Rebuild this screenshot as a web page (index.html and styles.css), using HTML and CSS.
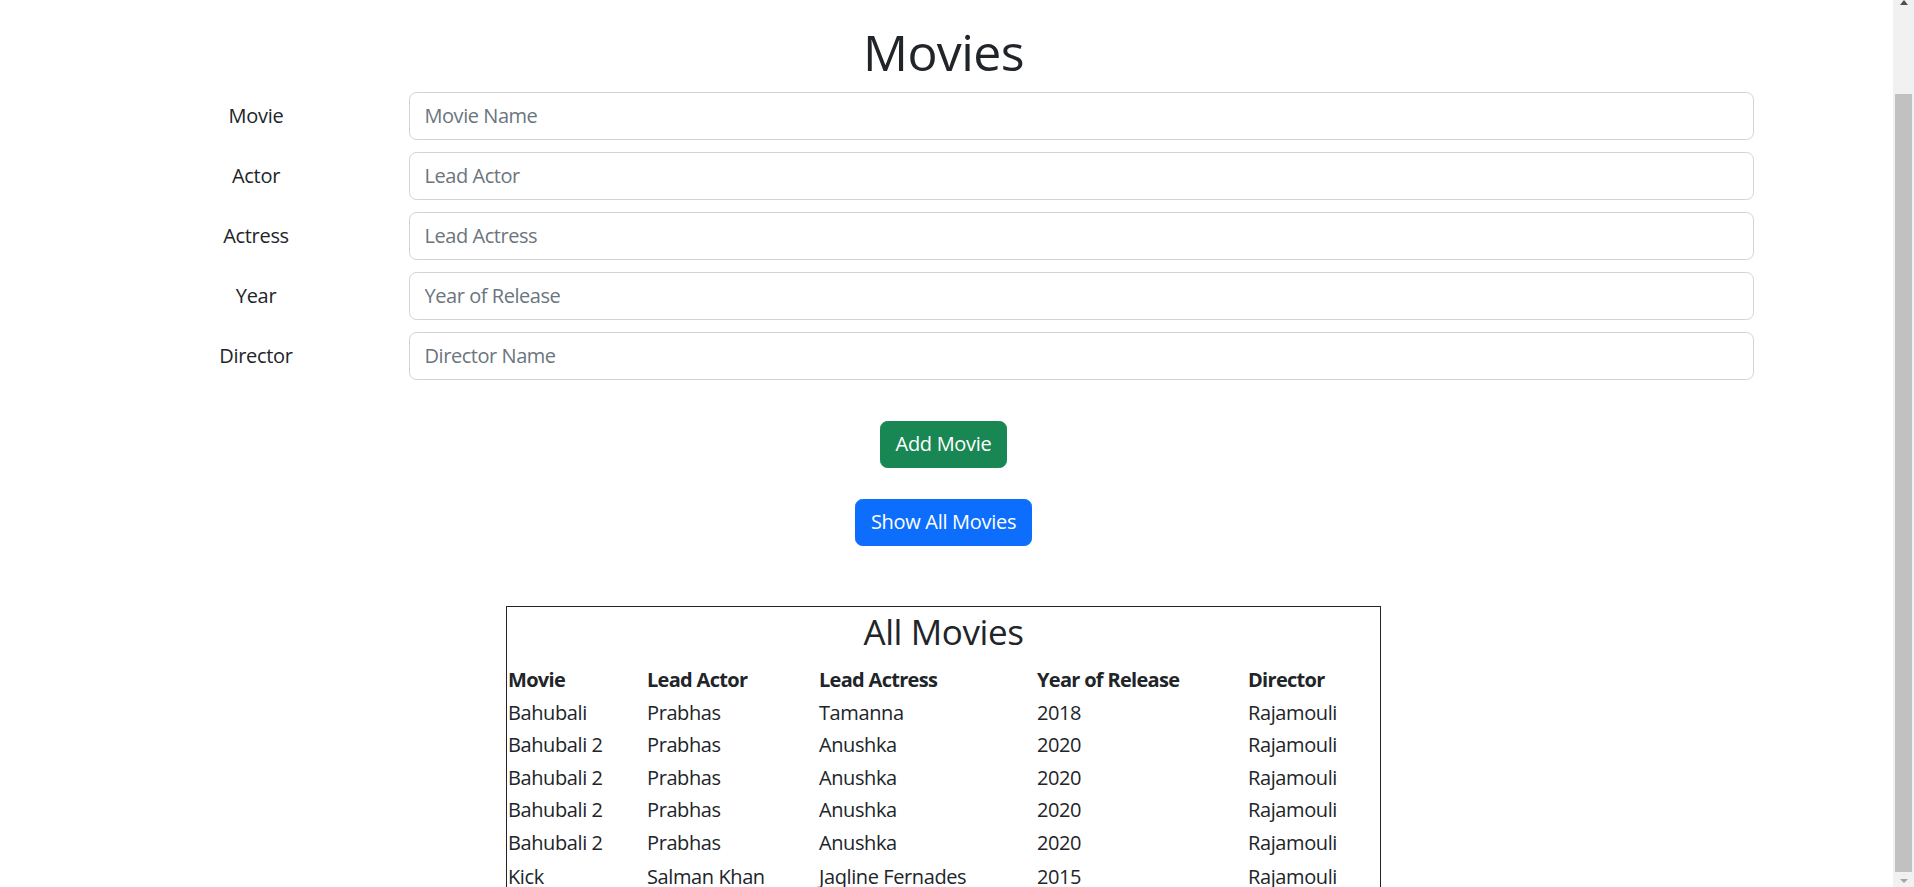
FILE: index.html
```html
<!DOCTYPE html>
<html lang="en">
<head>
<meta charset="utf-8">
<title>Movies</title>
<link rel="stylesheet" href="styles.css">
</head>
<body>
<div class="app">
  <main class="page">
    <h1 class="title">Movies</h1>
    <form class="movie-form">
      <div class="form-row">
        <label class="form-label" for="movie">Movie</label>
        <input class="form-control" id="movie" type="text" placeholder="Movie Name">
      </div>
      <div class="form-row">
        <label class="form-label" for="actor">Actor</label>
        <input class="form-control" id="actor" type="text" placeholder="Lead Actor">
      </div>
      <div class="form-row">
        <label class="form-label" for="actress">Actress</label>
        <input class="form-control" id="actress" type="text" placeholder="Lead Actress">
      </div>
      <div class="form-row">
        <label class="form-label" for="year">Year</label>
        <input class="form-control" id="year" type="text" placeholder="Year of Release">
      </div>
      <div class="form-row">
        <label class="form-label" for="director">Director</label>
        <input class="form-control" id="director" type="text" placeholder="Director Name">
      </div>
    </form>
    <div class="actions">
      <button class="btn btn-success" type="button">Add Movie</button>
      <button class="btn btn-primary" type="button">Show All Movies</button>
    </div>
    <section class="movie-list">
      <h3 class="list-title">All Movies</h3>
      <table class="movie-table">
        <colgroup>
          <col class="c-movie"><col class="c-actor"><col class="c-actress"><col class="c-year"><col class="c-director">
        </colgroup>
        <thead>
          <tr><th>Movie</th><th>Lead Actor</th><th>Lead Actress</th><th>Year of Release</th><th>Director</th></tr>
        </thead>
        <tbody>
          <tr><td>Bahubali</td><td>Prabhas</td><td>Tamanna</td><td>2018</td><td>Rajamouli</td></tr>
          <tr><td>Bahubali 2</td><td>Prabhas</td><td>Anushka</td><td>2020</td><td>Rajamouli</td></tr>
          <tr><td>Bahubali 2</td><td>Prabhas</td><td>Anushka</td><td>2020</td><td>Rajamouli</td></tr>
          <tr><td>Bahubali 2</td><td>Prabhas</td><td>Anushka</td><td>2020</td><td>Rajamouli</td></tr>
          <tr><td>Bahubali 2</td><td>Prabhas</td><td>Anushka</td><td>2020</td><td>Rajamouli</td></tr>
          <tr class="row-tall"><td>Kick</td><td>Salman Khan</td><td>Jaqline Fernades</td><td>2015</td><td>Rajamouli</td></tr>
        </tbody>
      </table>
    </section>
  </main>
  <aside class="scrollbar" aria-hidden="true">
    <span class="arrow-up"></span>
    <span class="thumb"></span>
    <span class="arrow-down"></span>
  </aside>
</div>
</body>
</html>
```
FILE: styles.css
```css
* { box-sizing: border-box; }

html, body {
  margin: 0;
  height: 100%;
  overflow: hidden;
}

body {
  font-family: "Open Sans", "Noto Sans", sans-serif;
  font-size: 20px;
  line-height: 1.5;
  color: #212529;
  background: #fff;
  letter-spacing: -0.3px;
}

.app {
  display: flex;
  height: 887px;
}

.page {
  flex: 1;
  overflow: hidden;
  padding: 22px 6px 0 0;
}

.title {
  margin: 0 0 10px;
  font-size: 50px;
  font-weight: 500;
  line-height: 1.2;
  text-align: center;
  letter-spacing: -0.6px;
}

.movie-form {
  width: 1650px;
  margin: 0 auto;
}

.form-row {
  display: grid;
  grid-template-columns: 275px 1fr;
  column-gap: 15px;
  padding-right: 15px;
  align-items: center;
  margin-bottom: 12.5px;
}

.form-label {
  text-align: center;
}

.form-control {
  display: block;
  width: 100%;
  height: 47.5px;
  padding: 7.5px 15px;
  font-family: inherit;
  font-size: 20px;
  line-height: 30px;
  letter-spacing: -0.45px;
  color: #212529;
  background: #fff;
  border: 1px solid #ced4da;
  border-radius: 7.5px;
}

.form-control::placeholder {
  color: #6c757d;
  opacity: 1;
}

.actions {
  display: flex;
  flex-direction: column;
  align-items: center;
  gap: 30.5px;
  margin-top: 41px;
}

.btn {
  display: inline-block;
  height: 47.5px;
  padding: 7.5px 15px;
  font-family: inherit;
  font-size: 20px;
  line-height: 30px;
  letter-spacing: -0.3px;
  color: #fff;
  border: 1px solid transparent;
  border-radius: 7.5px;
  cursor: pointer;
}

.btn-success {
  background: #198754;
  border-color: #198754;
}

.btn-primary {
  background: #0d6efd;
  border-color: #0d6efd;
}

.movie-list {
  width: 875px;
  margin: 60px auto 0;
  padding-top: 4px;
  border: 1px solid #212529;
}

.list-title {
  margin: 0 0 11px;
  font-size: 35px;
  font-weight: 500;
  line-height: 1.2;
  text-align: center;
  letter-spacing: -0.4px;
}

.movie-table {
  width: 100%;
  border-collapse: collapse;
  table-layout: fixed;
}

.c-movie { width: 139px; }
.c-actor { width: 172px; }
.c-actress { width: 218px; }
.c-year { width: 211px; }
.c-director { width: 133px; }

.movie-table th,
.movie-table td {
  padding: 1px 1px;
  line-height: 30.5px;
  text-align: left;
  white-space: nowrap;
  letter-spacing: -0.4px;
}

.movie-table th {
  font-weight: 700;
  letter-spacing: -0.7px;
}

.row-tall td {
  padding-top: 3px;
}

.scrollbar {
  flex: 0 0 21px;
  display: flex;
  flex-direction: column;
  align-items: center;
  background: #f1f1f1;
}

.arrow-up {
  width: 0;
  height: 0;
  border-left: 4.5px solid transparent;
  border-right: 4.5px solid transparent;
  border-bottom: 5px solid #505050;
}

.thumb {
  width: 17px;
  height: 778px;
  margin-top: 89px;
  background: #c1c1c1;
}

.arrow-down {
  width: 0;
  height: 0;
  margin-top: 7px;
  border-left: 4.5px solid transparent;
  border-right: 4.5px solid transparent;
  border-top: 4px solid #a3a3a3;
}
```
